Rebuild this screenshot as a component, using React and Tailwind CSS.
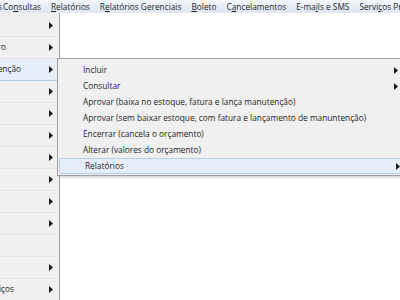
import React from 'react';

const font = { fontFamily: '"Open Sans", "Noto Sans", sans-serif' };

const Arrow = ({ className = '' }) => (
  <svg width="4" height="7" viewBox="0 0 4 7" className={className}>
    <path d="M0 0 L4 3.5 L0 7 Z" fill="#1a1a1a" />
  </svg>
);

const U = ({ children }) => <span className="underline underline-offset-1">{children}</span>;

const topItems = [
  <>Co<U>n</U>sultas</>,
  <><U>R</U>elatórios</>,
  <>R<U>e</U>latórios Gerenciais</>,
  <><U>B</U>oleto</>,
  <>C<U>a</U>ncelamentos</>,
  <>E-ma<U>i</U>ls e SMS</>,
  <>Servi<U>ç</U>os Prestados</>,
];

// text is clipped at the left edge; "end" is where the visible text stops
const leftRows = [
  { arrow: true },
  { text: 'Financeiro', end: 'w-[6px]', arrow: true },
  { text: 'Manutenção', end: 'w-[21px]', arrow: true, active: true },
  { arrow: true },
  { arrow: true },
  { arrow: true },
  { arrow: true },
  { arrow: true },
  { arrow: true },
  { arrow: true },
  { arrow: false },
  { arrow: true },
  { text: 'Serviços', end: 'w-[14px]', arrow: true },
];

const subItems = [
  { label: 'Incluir', arrow: true },
  { label: 'Consultar', arrow: true },
  { label: 'Aprovar (baixa no estoque, fatura e lança manutenção)' },
  { label: 'Aprovar (sem baixar estoque, com fatura e lançamento de manuntenção)' },
  { label: 'Encerrar (cancela o orçamento)' },
  { label: 'Alterar (valores do orçamento)' },
  { label: 'Relatórios', arrow: true, active: true },
];

export default function App() {
  return (
    <div className="w-[400px] h-[300px] overflow-hidden bg-white relative text-[8.3px] text-[#1e1e1e]" style={font}>
      <div className="h-[13px] pt-[2px] flex items-center whitespace-nowrap bg-gradient-to-b from-[#f4f7fc] to-[#dde6f3] border-b border-[#e3e9f2]">
        <span className="-ml-[2px] mr-[1px]">s</span>
        {topItems.map((t, i) => (
          <span key={i} className="mr-[10px]">{t}</span>
        ))}
      </div>

      <div className="flex">
        <div className="w-[60px] h-[287px] bg-[#f0f0f0] border-r border-[#a0a0a0] overflow-hidden pt-[2px]">
          {leftRows.map((r, i) => (
            <div
              key={i}
              className={`h-[22px] flex items-center relative whitespace-nowrap border-b mr-[2px] ${r.active ? 'bg-[#e6eefa] border-[#b4cdf0]' : 'border-[#e2e2e2]'}`}
            >
              {r.text && (
                <div className={`${r.end} flex justify-end shrink-0`}>
                  <span className="shrink-0">{r.text}</span>
                </div>
              )}
              {r.arrow && <Arrow className="absolute left-[49px]" />}
            </div>
          ))}
        </div>
      </div>

      <div className="absolute left-[57px] top-[58px] w-[360px] bg-[#f0f0f0] border border-[#a0a0a0] shadow-[2px_2px_2px_rgba(0,0,0,0.15)] pt-[3px] pb-[1px] whitespace-nowrap">
        {subItems.map((s, i) => (
          <div
            key={i}
            className={`h-[16px] flex items-center relative pl-[25px] ${s.active ? 'bg-[#e6eefa] border border-[#b4cdf0] rounded-[2px] mx-[1px] pl-[24px]' : ''}`}
          >
            {s.label}
            {s.arrow && <Arrow className="absolute left-[336px]" />}
          </div>
        ))}
      </div>
    </div>
  );
}
